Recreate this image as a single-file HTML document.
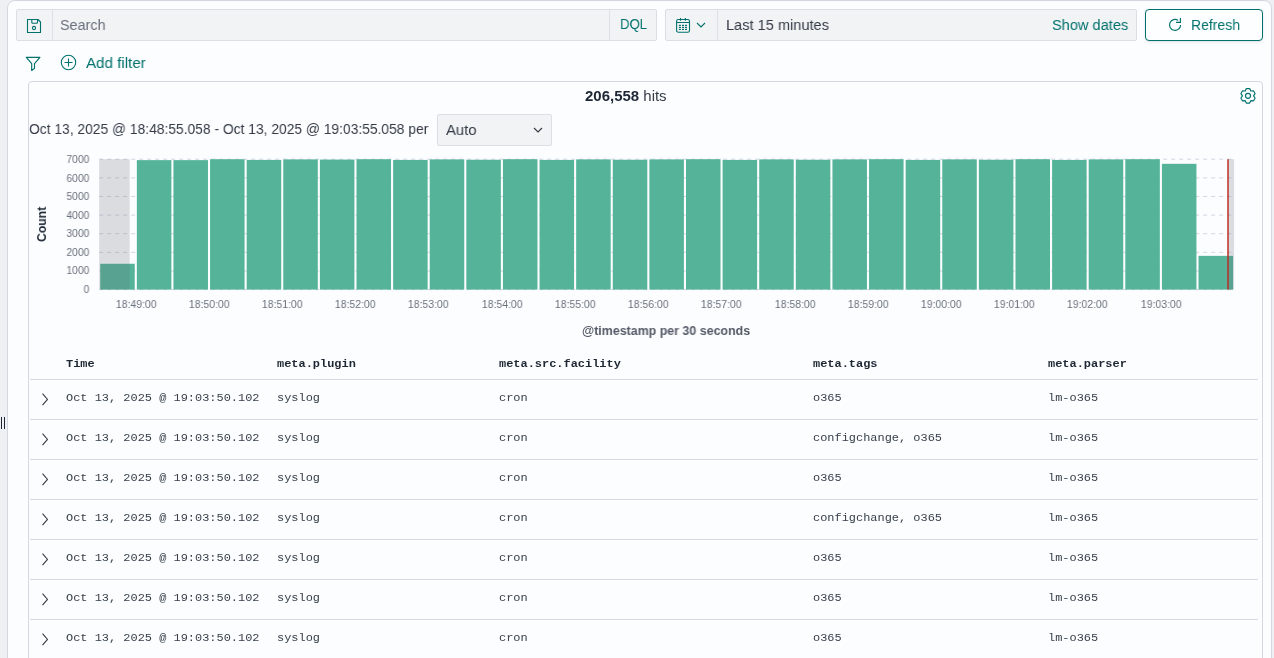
<!DOCTYPE html>
<html><head><meta charset="utf-8"><style>
html,body{margin:0;padding:0;width:1274px;height:658px;overflow:hidden;background:#eef0f3;font-family:'Liberation Sans',sans-serif;}
.abs{position:absolute}
#panel{position:absolute;left:7px;top:0;width:1265px;height:680px;background:#fcfdfe;border:1px solid #d3d8e0;border-radius:8px;box-sizing:border-box}
.box{position:absolute;background:#f1f3f5;border:1px solid #d9dfe3;border-radius:2px;box-sizing:border-box}
.t{position:absolute;white-space:nowrap;line-height:20px;transform-origin:0 0;will-change:transform}
#inner{position:absolute;left:28px;top:81px;width:1235px;height:600px;border:1px solid #d3d8e0;border-radius:4px;box-sizing:border-box}
.row{position:absolute;left:0;width:1274px;height:40px}
.row::before{content:"";position:absolute;left:30px;width:1228px;top:0;height:1px;background:#d3dae6}
.chev{position:absolute;left:37px;top:12px}
.c{position:absolute;top:11px;font-family:'Liberation Mono',monospace;font-size:11.3px;transform-origin:0 0;transform:scaleX(1.057);will-change:transform;color:#37404c;line-height:16px;white-space:nowrap}
.h{position:absolute;top:356px;font-family:'Liberation Mono',monospace;font-weight:bold;font-size:11.3px;transform-origin:0 0;transform:scaleX(1.057);will-change:transform;color:#1e2734;line-height:16px;white-space:nowrap}
</style></head><body>
<div id="panel"></div>
<div id="inner"></div>
<div class="box" style="left:16px;top:9px;width:641px;height:32px"></div>
<div class="abs" style="left:52px;top:10px;width:1px;height:30px;background:#dde1e6"></div>
<div class="abs" style="left:609px;top:10px;width:1px;height:30px;background:#dde1e6"></div>
<svg class="abs" style="left:26px;top:18px" width="16" height="16" viewBox="0 0 16 16"><path d="M1.5 1.5 h10.5 l2.5 2.5 v10.5 h-13 z" fill="none" stroke="#00716c" stroke-width="1.1" stroke-linejoin="round"/><path d="M5.8 1.5 v2.8 a1 1 0 0 0 1 1 h3.7 a1 1 0 0 0 1 -1 v-2.8" fill="none" stroke="#00716c" stroke-width="1.1"/><circle cx="8" cy="10" r="1.6" fill="none" stroke="#00716c" stroke-width="1.1"/></svg>
<div class="t" style="left:59.77px;top:14.90px;font-size:15.5px;font-weight:normal;color:#69707d;transform:scaleX(0.9277);">Search</div>
<div class="t" style="left:620.35px;top:14.00px;font-size:15.5px;font-weight:normal;color:#00716c;transform:scaleX(0.8484);">DQL</div>
<div class="box" style="left:665px;top:9px;width:472px;height:32px"></div>
<div class="abs" style="left:717px;top:10px;width:1px;height:30px;background:#dde1e6"></div>
<svg class="abs" style="left:675px;top:17px" width="17" height="17" viewBox="0 0 17 17"><rect x="1.6" y="2.5" width="12.9" height="12.7" rx="1.8" fill="none" stroke="#00716c" stroke-width="1.1"/><path d="M1.6 5.5 h12.9 M5.5 0.9 v2.8 M10.4 0.9 v2.8" stroke="#00716c" stroke-width="1.1"/><g fill="#00716c"><rect x="3.9" y="7.8" width="2" height="1.2"/><rect x="7" y="7.8" width="2" height="1.2"/><rect x="10" y="7.8" width="2" height="1.2"/><rect x="3.9" y="9.8" width="2" height="1.2"/><rect x="7" y="9.8" width="2" height="1.2"/><rect x="10" y="9.8" width="2" height="1.2"/><rect x="3.9" y="11.8" width="2" height="1.2"/><rect x="7" y="11.8" width="2" height="1.2"/><rect x="10" y="11.8" width="2" height="1.2"/></g></svg>
<svg class="abs" style="left:696px;top:21px" width="10" height="8" viewBox="0 0 10 8"><path d="M1 2 L5 6 L9 2" fill="none" stroke="#00716c" stroke-width="1.1"/></svg>
<div class="t" style="left:725.76px;top:15.10px;font-size:15.5px;font-weight:normal;color:#343b47;transform:scaleX(0.9407);">Last 15 minutes</div>
<div class="t" style="left:1051.66px;top:15.00px;font-size:15.5px;font-weight:normal;color:#00716c;transform:scaleX(0.9413);">Show dates</div>
<div class="abs" style="left:1145px;top:9px;width:118px;height:32px;border:1px solid #00716c;border-radius:4px;box-sizing:border-box;background:#fdfeff;box-shadow:0 1px 2px rgba(0,0,0,0.07),0 2px 4px rgba(0,0,0,0.04)"></div>
<svg class="abs" style="left:1168px;top:18px" width="16" height="16" viewBox="0 0 16 16"><path d="M12.55 6.9 A5.5 5.5 0 1 1 10.2 2.4" fill="none" stroke="#00716c" stroke-width="1.15"/><path d="M12.4 0 V4.4 H8" fill="none" stroke="#00716c" stroke-width="1.15"/></svg>
<div class="t" style="left:1191.30px;top:15.20px;font-size:15.5px;font-weight:normal;color:#00716c;transform:scaleX(0.9019);">Refresh</div>
<svg class="abs" style="left:25px;top:56px" width="16" height="16" viewBox="0 0 16 16"><path d="M1.3 1.4 H14.9 L9.5 7.7 V12.4 L6.7 14.5 V7.7 Z" fill="none" stroke="#00716c" stroke-width="1.15" stroke-linejoin="round"/></svg>
<svg class="abs" style="left:60px;top:54px" width="17" height="17" viewBox="0 0 17 17"><circle cx="8.5" cy="8.5" r="7.2" fill="none" stroke="#00716c" stroke-width="1.1"/><path d="M8.5 4.5v8M4.5 8.5h8" stroke="#00716c" stroke-width="1.1"/></svg>
<div class="t" style="left:85.50px;top:53.20px;font-size:15.5px;font-weight:normal;color:#00716c;transform:scaleX(0.9754);">Add filter</div>
<div class="t" style="left:584.70px;top:86.20px;font-size:14px;font-weight:normal;color:#343b47;transform:scaleX(1.0697);"><b style="color:#1d2635">206,558</b> hits</div>
<svg class="abs" style="left:1238px;top:86px" width="20" height="20" viewBox="0 0 20 20"><path d="M8.32 2.59 L11.68 2.59 L12.78 5.04 L15.45 4.77 L17.12 7.67 L15.55 9.85 L17.12 12.03 L15.45 14.93 L12.78 14.66 L11.68 17.11 L8.32 17.11 L7.23 14.66 L4.55 14.93 L2.88 12.03 L4.45 9.85 L2.88 7.67 L4.55 4.77 L7.22 5.04 Z" fill="none" stroke="#00716c" stroke-width="1.15" stroke-linejoin="round"/><circle cx="10" cy="9.85" r="2.5" fill="none" stroke="#00716c" stroke-width="1.15"/></svg>
<div class="t" style="left:29.11px;top:119.00px;font-size:15.5px;font-weight:normal;color:#343b47;transform:scaleX(0.8919);">Oct 13, 2025 @ 18:48:55.058 - Oct 13, 2025 @ 19:03:55.058 per</div>
<div class="box" style="left:437px;top:114px;width:115px;height:32px"></div>
<div class="t" style="left:445.60px;top:119.80px;font-size:15.5px;font-weight:normal;color:#343b47;transform:scaleX(0.9581);">Auto</div>
<svg class="abs" style="left:533px;top:126px" width="10" height="8" viewBox="0 0 10 8"><path d="M1 2 L5 6 L9 2" fill="none" stroke="#343741" stroke-width="1.1"/></svg>
<svg width="1274" height="658" style="position:absolute;left:0;top:0">
<line x1="99.19" y1="159.20" x2="1234.1" y2="159.20" stroke="#cfd5e1" stroke-width="1" stroke-dasharray="4 4"/>
<line x1="99.19" y1="177.83" x2="1234.1" y2="177.83" stroke="#cfd5e1" stroke-width="1" stroke-dasharray="4 4"/>
<line x1="99.19" y1="196.46" x2="1234.1" y2="196.46" stroke="#cfd5e1" stroke-width="1" stroke-dasharray="4 4"/>
<line x1="99.19" y1="215.09" x2="1234.1" y2="215.09" stroke="#cfd5e1" stroke-width="1" stroke-dasharray="4 4"/>
<line x1="99.19" y1="233.71" x2="1234.1" y2="233.71" stroke="#cfd5e1" stroke-width="1" stroke-dasharray="4 4"/>
<line x1="99.19" y1="252.34" x2="1234.1" y2="252.34" stroke="#cfd5e1" stroke-width="1" stroke-dasharray="4 4"/>
<line x1="99.19" y1="270.97" x2="1234.1" y2="270.97" stroke="#cfd5e1" stroke-width="1" stroke-dasharray="4 4"/>
<line x1="99.19" y1="289.60" x2="1234.1" y2="289.60" stroke="#cfd5e1" stroke-width="1" stroke-dasharray="4 4"/>
<rect x="100.24" y="263.76" width="34.51" height="25.84" fill="#54b399"/>
<rect x="136.85" y="160.13" width="34.51" height="129.47" fill="#54b399"/>
<rect x="173.46" y="160.13" width="34.51" height="129.47" fill="#54b399"/>
<rect x="210.07" y="159.20" width="34.51" height="130.40" fill="#54b399"/>
<rect x="246.68" y="159.95" width="34.51" height="129.65" fill="#54b399"/>
<rect x="283.29" y="159.39" width="34.51" height="130.21" fill="#54b399"/>
<rect x="319.90" y="159.57" width="34.51" height="130.03" fill="#54b399"/>
<rect x="356.51" y="159.20" width="34.51" height="130.40" fill="#54b399"/>
<rect x="393.12" y="159.95" width="34.51" height="129.65" fill="#54b399"/>
<rect x="429.73" y="159.39" width="34.51" height="130.21" fill="#54b399"/>
<rect x="466.34" y="159.76" width="34.51" height="129.84" fill="#54b399"/>
<rect x="502.95" y="159.20" width="34.51" height="130.40" fill="#54b399"/>
<rect x="539.56" y="159.95" width="34.51" height="129.65" fill="#54b399"/>
<rect x="576.17" y="159.39" width="34.51" height="130.21" fill="#54b399"/>
<rect x="612.78" y="159.76" width="34.51" height="129.84" fill="#54b399"/>
<rect x="649.39" y="159.39" width="34.51" height="130.21" fill="#54b399"/>
<rect x="686.00" y="159.20" width="34.51" height="130.40" fill="#54b399"/>
<rect x="722.61" y="159.95" width="34.51" height="129.65" fill="#54b399"/>
<rect x="759.22" y="159.39" width="34.51" height="130.21" fill="#54b399"/>
<rect x="795.83" y="159.76" width="34.51" height="129.84" fill="#54b399"/>
<rect x="832.44" y="159.39" width="34.51" height="130.21" fill="#54b399"/>
<rect x="869.05" y="159.20" width="34.51" height="130.40" fill="#54b399"/>
<rect x="905.66" y="159.95" width="34.51" height="129.65" fill="#54b399"/>
<rect x="942.27" y="159.39" width="34.51" height="130.21" fill="#54b399"/>
<rect x="978.88" y="159.76" width="34.51" height="129.84" fill="#54b399"/>
<rect x="1015.49" y="159.20" width="34.51" height="130.40" fill="#54b399"/>
<rect x="1052.10" y="159.95" width="34.51" height="129.65" fill="#54b399"/>
<rect x="1088.71" y="159.39" width="34.51" height="130.21" fill="#54b399"/>
<rect x="1125.32" y="159.20" width="34.51" height="130.40" fill="#54b399"/>
<rect x="1161.93" y="163.82" width="34.51" height="125.78" fill="#54b399"/>
<rect x="1198.54" y="255.85" width="34.51" height="33.75" fill="#54b399"/>
<rect x="99.19" y="159.2" width="30.51" height="130.40000000000003" fill="rgba(98,106,120,0.22)"/>
<rect x="1228" y="159.2" width="6.1" height="130.40000000000003" fill="rgba(98,106,120,0.22)"/>
<line x1="1228" y1="159.2" x2="1228" y2="289.6" stroke="rgba(189,39,30,0.72)" stroke-width="2"/>
</svg>
<div class="t" style="left:0px;width:95.24px;text-align:right;top:278.70px;font-size:11px;color:#69707d;transform:scaleX(0.9391)">0</div><div class="t" style="left:0px;width:95.24px;text-align:right;top:260.20px;font-size:11px;color:#69707d;transform:scaleX(0.9391)">1000</div><div class="t" style="left:0px;width:95.24px;text-align:right;top:241.70px;font-size:11px;color:#69707d;transform:scaleX(0.9391)">2000</div><div class="t" style="left:0px;width:95.24px;text-align:right;top:223.20px;font-size:11px;color:#69707d;transform:scaleX(0.9391)">3000</div><div class="t" style="left:0px;width:95.24px;text-align:right;top:204.70px;font-size:11px;color:#69707d;transform:scaleX(0.9391)">4000</div><div class="t" style="left:0px;width:95.24px;text-align:right;top:186.20px;font-size:11px;color:#69707d;transform:scaleX(0.9391)">5000</div><div class="t" style="left:0px;width:95.24px;text-align:right;top:167.70px;font-size:11px;color:#69707d;transform:scaleX(0.9391)">6000</div><div class="t" style="left:0px;width:95.24px;text-align:right;top:149.20px;font-size:11px;color:#69707d;transform:scaleX(0.9391)">7000</div>
<div class="t" style="left:99.52px;width:80px;text-align:center;top:293.80px;font-size:11.5px;color:#69707d;transform:scaleX(0.9070)">18:49:00</div><div class="t" style="left:172.74px;width:80px;text-align:center;top:293.80px;font-size:11.5px;color:#69707d;transform:scaleX(0.9070)">18:50:00</div><div class="t" style="left:245.96px;width:80px;text-align:center;top:293.80px;font-size:11.5px;color:#69707d;transform:scaleX(0.9070)">18:51:00</div><div class="t" style="left:319.18px;width:80px;text-align:center;top:293.80px;font-size:11.5px;color:#69707d;transform:scaleX(0.9070)">18:52:00</div><div class="t" style="left:392.40px;width:80px;text-align:center;top:293.80px;font-size:11.5px;color:#69707d;transform:scaleX(0.9070)">18:53:00</div><div class="t" style="left:465.62px;width:80px;text-align:center;top:293.80px;font-size:11.5px;color:#69707d;transform:scaleX(0.9070)">18:54:00</div><div class="t" style="left:538.84px;width:80px;text-align:center;top:293.80px;font-size:11.5px;color:#69707d;transform:scaleX(0.9070)">18:55:00</div><div class="t" style="left:612.06px;width:80px;text-align:center;top:293.80px;font-size:11.5px;color:#69707d;transform:scaleX(0.9070)">18:56:00</div><div class="t" style="left:685.28px;width:80px;text-align:center;top:293.80px;font-size:11.5px;color:#69707d;transform:scaleX(0.9070)">18:57:00</div><div class="t" style="left:758.50px;width:80px;text-align:center;top:293.80px;font-size:11.5px;color:#69707d;transform:scaleX(0.9070)">18:58:00</div><div class="t" style="left:831.72px;width:80px;text-align:center;top:293.80px;font-size:11.5px;color:#69707d;transform:scaleX(0.9070)">18:59:00</div><div class="t" style="left:904.94px;width:80px;text-align:center;top:293.80px;font-size:11.5px;color:#69707d;transform:scaleX(0.9070)">19:00:00</div><div class="t" style="left:978.16px;width:80px;text-align:center;top:293.80px;font-size:11.5px;color:#69707d;transform:scaleX(0.9070)">19:01:00</div><div class="t" style="left:1051.38px;width:80px;text-align:center;top:293.80px;font-size:11.5px;color:#69707d;transform:scaleX(0.9070)">19:02:00</div><div class="t" style="left:1124.60px;width:80px;text-align:center;top:293.80px;font-size:11.5px;color:#69707d;transform:scaleX(0.9070)">19:03:00</div>
<div class="abs" style="left:0;top:0;width:0;height:0;transform-origin:0 0;transform:translate(0px,0px) rotate(-90deg)"><div class="t" style="left:-242.00px;top:32.10px;font-size:13px;font-weight:bold;color:#1f2a37;transform:scaleX(0.9368);">Count</div></div>
<div class="t" style="left:582.01px;top:320.70px;font-size:12.5px;font-weight:bold;color:#535966;transform:scaleX(0.9940);">@timestamp per 30 seconds</div>
<div class="h" style="left:66px">Time</div><div class="h" style="left:277px">meta.plugin</div><div class="h" style="left:499px">meta.src.facility</div><div class="h" style="left:813px">meta.tags</div><div class="h" style="left:1048px">meta.parser</div>
<div class="row" style="top:379px"><svg class="chev" width="16" height="16" viewBox="0 0 16 16"><path d="M5.5 2.6 L10.5 8.4 L5.5 14.2" fill="none" stroke="#343741" stroke-width="1.05"/></svg><span class="c" style="left:66px">Oct 13, 2025 @ 19:03:50.102</span><span class="c" style="left:277px">syslog</span><span class="c" style="left:499px">cron</span><span class="c" style="left:813px">o365</span><span class="c" style="left:1048px">lm-o365</span></div>
<div class="row" style="top:419px"><svg class="chev" width="16" height="16" viewBox="0 0 16 16"><path d="M5.5 2.6 L10.5 8.4 L5.5 14.2" fill="none" stroke="#343741" stroke-width="1.05"/></svg><span class="c" style="left:66px">Oct 13, 2025 @ 19:03:50.102</span><span class="c" style="left:277px">syslog</span><span class="c" style="left:499px">cron</span><span class="c" style="left:813px">configchange, o365</span><span class="c" style="left:1048px">lm-o365</span></div>
<div class="row" style="top:459px"><svg class="chev" width="16" height="16" viewBox="0 0 16 16"><path d="M5.5 2.6 L10.5 8.4 L5.5 14.2" fill="none" stroke="#343741" stroke-width="1.05"/></svg><span class="c" style="left:66px">Oct 13, 2025 @ 19:03:50.102</span><span class="c" style="left:277px">syslog</span><span class="c" style="left:499px">cron</span><span class="c" style="left:813px">o365</span><span class="c" style="left:1048px">lm-o365</span></div>
<div class="row" style="top:499px"><svg class="chev" width="16" height="16" viewBox="0 0 16 16"><path d="M5.5 2.6 L10.5 8.4 L5.5 14.2" fill="none" stroke="#343741" stroke-width="1.05"/></svg><span class="c" style="left:66px">Oct 13, 2025 @ 19:03:50.102</span><span class="c" style="left:277px">syslog</span><span class="c" style="left:499px">cron</span><span class="c" style="left:813px">configchange, o365</span><span class="c" style="left:1048px">lm-o365</span></div>
<div class="row" style="top:539px"><svg class="chev" width="16" height="16" viewBox="0 0 16 16"><path d="M5.5 2.6 L10.5 8.4 L5.5 14.2" fill="none" stroke="#343741" stroke-width="1.05"/></svg><span class="c" style="left:66px">Oct 13, 2025 @ 19:03:50.102</span><span class="c" style="left:277px">syslog</span><span class="c" style="left:499px">cron</span><span class="c" style="left:813px">o365</span><span class="c" style="left:1048px">lm-o365</span></div>
<div class="row" style="top:579px"><svg class="chev" width="16" height="16" viewBox="0 0 16 16"><path d="M5.5 2.6 L10.5 8.4 L5.5 14.2" fill="none" stroke="#343741" stroke-width="1.05"/></svg><span class="c" style="left:66px">Oct 13, 2025 @ 19:03:50.102</span><span class="c" style="left:277px">syslog</span><span class="c" style="left:499px">cron</span><span class="c" style="left:813px">o365</span><span class="c" style="left:1048px">lm-o365</span></div>
<div class="row" style="top:619px"><svg class="chev" width="16" height="16" viewBox="0 0 16 16"><path d="M5.5 2.6 L10.5 8.4 L5.5 14.2" fill="none" stroke="#343741" stroke-width="1.05"/></svg><span class="c" style="left:66px">Oct 13, 2025 @ 19:03:50.102</span><span class="c" style="left:277px">syslog</span><span class="c" style="left:499px">cron</span><span class="c" style="left:813px">o365</span><span class="c" style="left:1048px">lm-o365</span></div>

<div class="abs" style="left:1px;top:417px;width:1px;height:12px;background:#1d2433"></div>
<div class="abs" style="left:4px;top:417px;width:1px;height:12px;background:#1d2433"></div>
</body></html>
